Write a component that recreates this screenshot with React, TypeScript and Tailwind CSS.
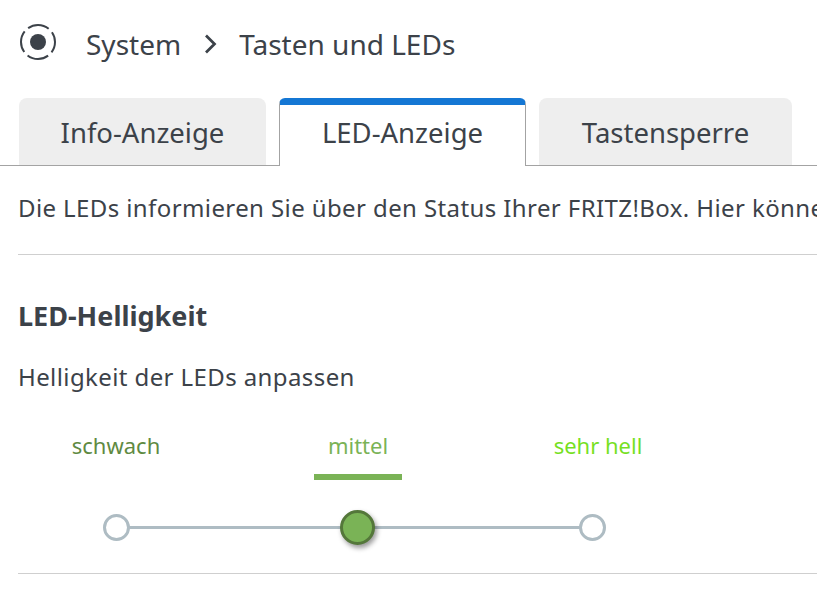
function Tab({ label, active, width }: { label: string; active?: boolean; width: string }) {
  if (active) {
    return (
      <div className={`${width} h-[68px] -mb-px bg-white border-x border-[#a3a3a3] rounded-t-[6px] border-t-[7px] border-t-[#1477d4] flex items-center justify-center text-[27.5px] pb-[5px]`}>
        {label}
      </div>
    );
  }
  return (
    <div className={`${width} h-[67px] bg-[#eeeeee] rounded-t-[8px] flex items-center justify-center text-[27.5px] pt-[2px]`}>
      {label}
    </div>
  );
}

function SliderStop({ label, color, selected }: { label: string; color: string; selected?: boolean }) {
  return (
    <div className={`w-[88px] h-[59px] flex justify-center pt-[10px] text-[22px] leading-7 whitespace-nowrap ${color} ${selected ? 'border-b-[6px] border-[#7ab356]' : ''}`}>
      {label}
    </div>
  );
}

export default function App() {
  return (
    <div className="w-[817px] h-[600px] overflow-hidden bg-white text-[#3c4249] font-['Noto_Sans',sans-serif]">
      <header className="h-[98px] pl-[19px] flex items-center gap-[29px] pb-[8px]">
        <svg width="38" height="38" viewBox="0 0 38 38" fill="none" className="-mt-[6px]">
          <circle cx="19" cy="19" r="8" fill="#3c4249" />
          <circle cx="19" cy="19" r="17" stroke="#3c4249" strokeWidth="2" strokeDasharray="22 4.7" strokeDashoffset="11" />
        </svg>
        <div className="flex items-center text-[28px] -mt-[2px]">
          <span>System</span>
          <svg width="28" height="28" viewBox="0 0 28 28" fill="none" className="mx-[15px]">
            <path d="M10 5.5 L18.5 14 L10 22.5" stroke="#3c4249" strokeWidth="2.75" />
          </svg>
          <span>Tasten und LEDs</span>
        </div>
      </header>

      <nav className="h-[68px] pl-[19px] flex items-end gap-[13px] border-b border-[#a3a3a3]">
        <Tab label="Info-Anzeige" width="w-[247px]" />
        <Tab label="LED-Anzeige" width="w-[247px]" active />
        <Tab label="Tastensperre" width="w-[253px]" />
      </nav>

      <main className="pl-[18px]">
        <p className="h-[89px] pt-[28px] text-[24px] tracking-[0.4px] leading-7 whitespace-nowrap overflow-hidden border-b border-[#cfcfcf]">
          Die LEDs informieren Sie über den Status Ihrer FRITZ!Box. Hier können
        </p>
        <h2 className="mt-[45px] text-[27px] leading-8 font-bold">LED-Helligkeit</h2>
        <p className="mt-[31px] text-[24px] tracking-[0.4px] leading-7">Helligkeit der LEDs anpassen</p>

        <div className="mt-[30px] pl-[54px] flex gap-[153px]">
          <SliderStop label="schwach" color="text-[#5f8a42]" />
          <SliderStop label="mittel" color="text-[#7ab356] ml-px -mr-px" selected />
          <SliderStop label="sehr hell" color="text-[#76e01f]" />
        </div>

        <div className="relative h-[94px] border-b border-[#cfcfcf]">
          <div className="absolute left-[98px] top-[46px] w-[477px] h-[3px] bg-[#aebcc3]" />
          <div className="absolute left-[85px] top-[34px] w-[27px] h-[27px] rounded-full bg-white border-[3px] border-[#aebcc3]" />
          <div className="absolute left-[322px] top-[30px] w-[35px] h-[35px] rounded-full bg-[#7ab356] border-[3px] border-[#54773a] shadow-[2px_3px_5px_rgba(0,0,0,0.4)]" />
          <div className="absolute left-[561px] top-[34px] w-[27px] h-[27px] rounded-full bg-white border-[3px] border-[#aebcc3]" />
        </div>
      </main>
    </div>
  );
}
